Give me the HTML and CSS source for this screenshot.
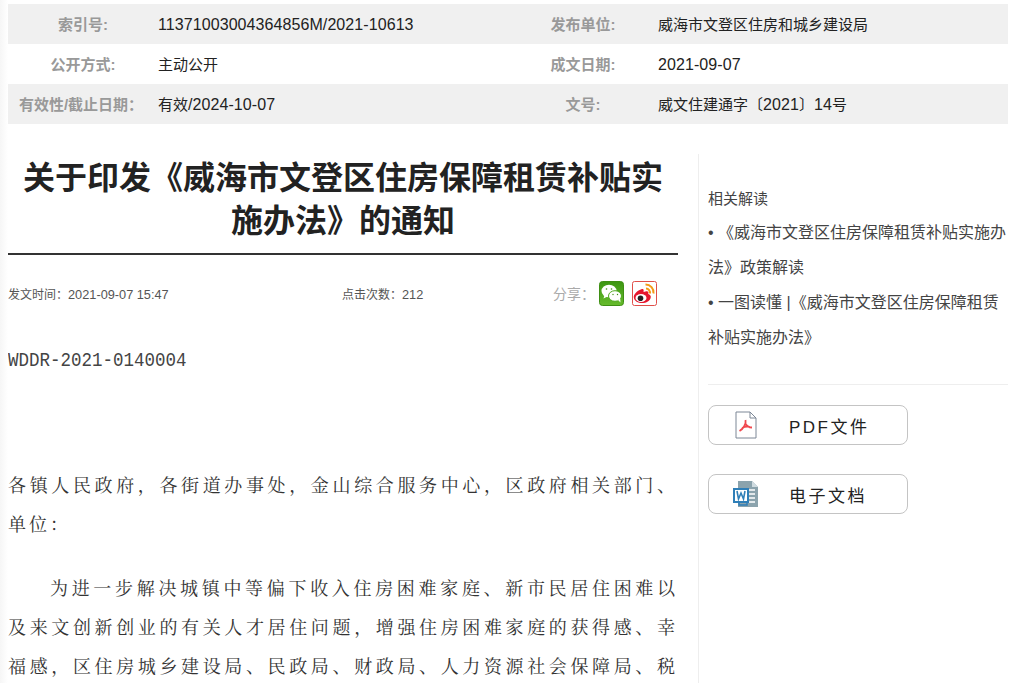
FILE: index.html
```html
<!DOCTYPE html>
<html lang="zh-CN">
<head>
<meta charset="utf-8">
<title>关于印发《威海市文登区住房保障租赁补贴实施办法》的通知</title>
<link rel="stylesheet" href="styles.css">
</head>
<body>
<div class="page">
  <div class="info">
    <div class="row">
      <div class="label">索引号:</div><div class="value"><span class="num">11371003004364856M/2021-10613</span></div>
      <div class="label">发布单位:</div><div class="value">威海市文登区住房和城乡建设局</div>
    </div>
    <div class="row">
      <div class="label">公开方式:</div><div class="value">主动公开</div>
      <div class="label">成文日期:</div><div class="value"><span class="num">2021-09-07</span></div>
    </div>
    <div class="row">
      <div class="label label-wide">有效性/截止日期：</div><div class="value">有效<span class="num">/2024-10-07</span></div>
      <div class="label">文号:</div><div class="value">威文住建通字〔<span class="num">2021</span>〕<span class="num">14</span>号</div>
    </div>
  </div>
  <div class="main">
    <article class="article">
      <h1 class="title">关于印发《威海市文登区住房保障租赁补贴实施办法》的通知</h1>
      <div class="meta">
        <span class="meta-time">发文时间：<span class="meta-num">2021-09-07 15:47</span></span>
        <span class="meta-hits">点击次数：<span class="meta-num">212</span></span>
        <span class="share">
          <span class="share-label">分享：</span>
          <svg class="share-icon" width="25" height="25" viewBox="0 0 25 25">
            <defs>
              <linearGradient id="wechat-bg" x1="0" y1="0" x2="0" y2="1">
                <stop offset="0" stop-color="#3c9612"/>
                <stop offset="1" stop-color="#66bb2c"/>
              </linearGradient>
            </defs>
            <rect x="0.5" y="0.5" width="24" height="24" rx="3" fill="url(#wechat-bg)" stroke="#3f8f14"/>
            <ellipse cx="10" cy="10" rx="7.500" ry="6.300" fill="#fff"/>
            <path d="M5.500 14l-1 3.500 4-2z" fill="#fff"/>
            <ellipse cx="16" cy="15" rx="6.500" ry="5.300" fill="#fff" stroke="#4fa81e"/>
            <path d="M19 19l2.500 2.500-.3-4z" fill="#fff"/>
            <circle cx="7.500" cy="8" r=".8" fill="#3f8f14"/><circle cx="12.500" cy="8" r=".8" fill="#3f8f14"/>
            <circle cx="14" cy="13.500" r=".7" fill="#3f8f14"/><circle cx="18.500" cy="13.500" r=".7" fill="#3f8f14"/>
          </svg>
          <svg class="share-icon" width="25" height="25" viewBox="0 0 25 25">
            <rect x="0.5" y="0.5" width="24" height="24" rx="2" fill="#fff" stroke="#e0504a"/>
            <path d="M10 8C5 9.500 1.500 13.500 1.800 16.500 2.300 20.500 7 22.500 11.500 22 16 21.500 19 18.500 18.800 15.500 18.600 14 17 13.200 16.200 13 17 11 16 9.800 13.500 10.500L11.500 11C12 8.500 11.500 7.600 10 8z" fill="#e6162d"/>
            <ellipse cx="9" cy="17" rx="5.500" ry="4" fill="#fff"/>
            <circle cx="8.500" cy="17.200" r="2.800" fill="#222"/>
            <path d="M13.500 3.500a8 8 0 0 1 8 9" fill="none" stroke="#f39a16" stroke-width="2"/>
            <path d="M14 7.500a4 4 0 0 1 3.800 5" fill="none" stroke="#f39a16" stroke-width="2"/>
          </svg>
        </span>
      </div>
      <div class="content">
        <p class="code"><span class="code-text">WDDR-2021-0140004</span></p>
        <p class="to">各镇人民政府，各街道办事处，金山综合服务中心，区政府相关部门、单位：</p>
        <p class="para">为进一步解决城镇中等偏下收入住房困难家庭、新市民居住困难以及来文创新创业的有关人才居住问题，增强住房困难家庭的获得感、幸福感，区住房城乡建设局、民政局、财政局、人力资源社会保障局、税</p>
      </div>
    </article>
    <aside class="side">
      <div class="related">
        <div class="related-head">相关解读</div>
        <div class="related-item">• 《威海市文登区住房保障租赁补贴实施办法》政策解读</div>
        <div class="related-item">• 一图读懂 |《威海市文登区住房保障租赁补贴实施办法》</div>
      </div>
      <a class="file-btn">
        <svg class="file-icon" width="26" height="28" viewBox="-2 0 26 28">
          <path d="M1 1h14l6 6v20H1z" fill="#fff" stroke="#7c8796" stroke-width="1"/>
          <path d="M15 1v6h6" fill="none" stroke="#7c8796" stroke-width="1"/>
          <path d="M10.500 9c1 4-2.500 9-6 11M10 12c1.500 3 4 4.500 7 4.500M7 17c3-1.500 6-1.500 8-1" fill="none" stroke="#f0484e" stroke-width="1.800"/>
        </svg>
        <span class="file-name">PDF文件</span>
      </a>
      <a class="file-btn">
        <svg class="file-icon" width="26" height="28" viewBox="0 0 26 28">
          <path d="M5 1h14l6 6v20H5z" fill="#8ba3ad"/>
          <path d="M19 1l6 6h-6z" fill="#cfdbe0"/>
          <path d="M16 10h6M16 14h6M16 18h6M16 22h6" stroke="#fff" stroke-width="1.300"/>
          <rect x="1" y="9" width="14" height="13" fill="#fff" stroke="#2f7fb8" stroke-width="2"/>
          <path d="M4 11l1.500 8 2.500-6 2.500 6 1.500-8" fill="none" stroke="#2f7fb8" stroke-width="1.600"/>
          <path d="M6 22v3h8v-3" fill="none" stroke="#2f7fb8" stroke-width="1.500"/>
        </svg>
        <span class="file-name">电子文档</span>
      </a>
    </aside>
  </div>
</div>
</body>
</html>
```
FILE: styles.css
```css
html, body {
  margin: 0;
  height: 683px;
  overflow: hidden;
}
body {
  background: linear-gradient(to right, #f6f6f6, #fff 8px);
  font-family: "Liberation Sans", "Noto Sans CJK SC", sans-serif;
  color: #333;
}
.page {
  width: 1000px;
  padding: 4px 0 0 8px;
}
.row {
  display: grid;
  grid-template-columns: 150px 350px 150px 350px;
  height: 40px;
  align-items: center;
  font-size: 15px;
  line-height: 20px;
  background: #fff;
}
.row:nth-child(odd) {
  background: #f0f0f0;
}
.label {
  text-align: center;
  font-weight: bold;
  color: #999;
  padding-top: 1px;
}
.label-wide {
  padding-right: 4px;
}
.value {
  color: #222;
  padding-top: 1px;
}
.num {
  font-size: 16px;
  letter-spacing: 0.080px;
}
.main {
  display: flex;
  margin-top: 30px;
}
.article {
  width: 670px;
  flex: none;
}
.title {
  margin: 0;
  font-size: 32px;
  line-height: 43px;
  font-weight: bold;
  text-align: center;
  color: #222;
  padding: 3px 0 10px;
  border-bottom: 2px solid #333;
}
.meta {
  display: flex;
  align-items: center;
  height: 76px;
  font-size: 12px;
  color: #555;
}
.meta-num {
  font-size: 12.750px;
}
.meta-time {
  width: 334px;
}
.meta-hits {
  width: 211px;
}
.share {
  display: flex;
  align-items: center;
  gap: 8px;
}
.share-label {
  font-size: 14px;
  color: #aaa;
  margin-right: -4px;
}
.content {
  font-family: "Liberation Serif", "Noto Serif CJK SC", "Noto Sans CJK SC", serif;
  font-size: 18px;
  line-height: 39px;
  letter-spacing: 3px;
  color: #333;
}
.content p {
  margin: 0;
  text-align: justify;
}
.content .code {
  margin-top: 10px;
  margin-bottom: 87px;
}
.code-text {
  display: inline-block;
  font-family: "Liberation Mono", monospace;
  font-size: 20px;
  letter-spacing: 0;
  color: #444;
  transform: scaleX(0.875);
  transform-origin: left center;
}
.content .to {
  margin-bottom: 25px;
}
.content .para {
  text-indent: 42px;
  text-align-last: justify;
}
.side {
  margin-left: 20px;
  padding: 28px 0 0 9px;
  width: 300px;
  border-left: 1px solid #eee;
  flex: none;
}
.related {
  line-height: 35px;
  color: #444;
  padding-bottom: 29px;
  border-bottom: 1px solid #eee;
  margin-bottom: 20px;
}
.related-head {
  font-size: 15px;
  line-height: 33px;
}
.related-item {
  font-size: 16px;
}
.file-btn {
  display: flex;
  align-items: center;
  box-sizing: border-box;
  width: 200px;
  height: 40px;
  border: 1px solid #c4c4c4;
  border-radius: 8px;
  margin-bottom: 29px;
  padding-left: 24px;
}
.file-icon {
  flex: none;
}
.file-name {
  margin-left: 30px;
  font-size: 17px;
  letter-spacing: 2.500px;
  color: #222;
}
```
